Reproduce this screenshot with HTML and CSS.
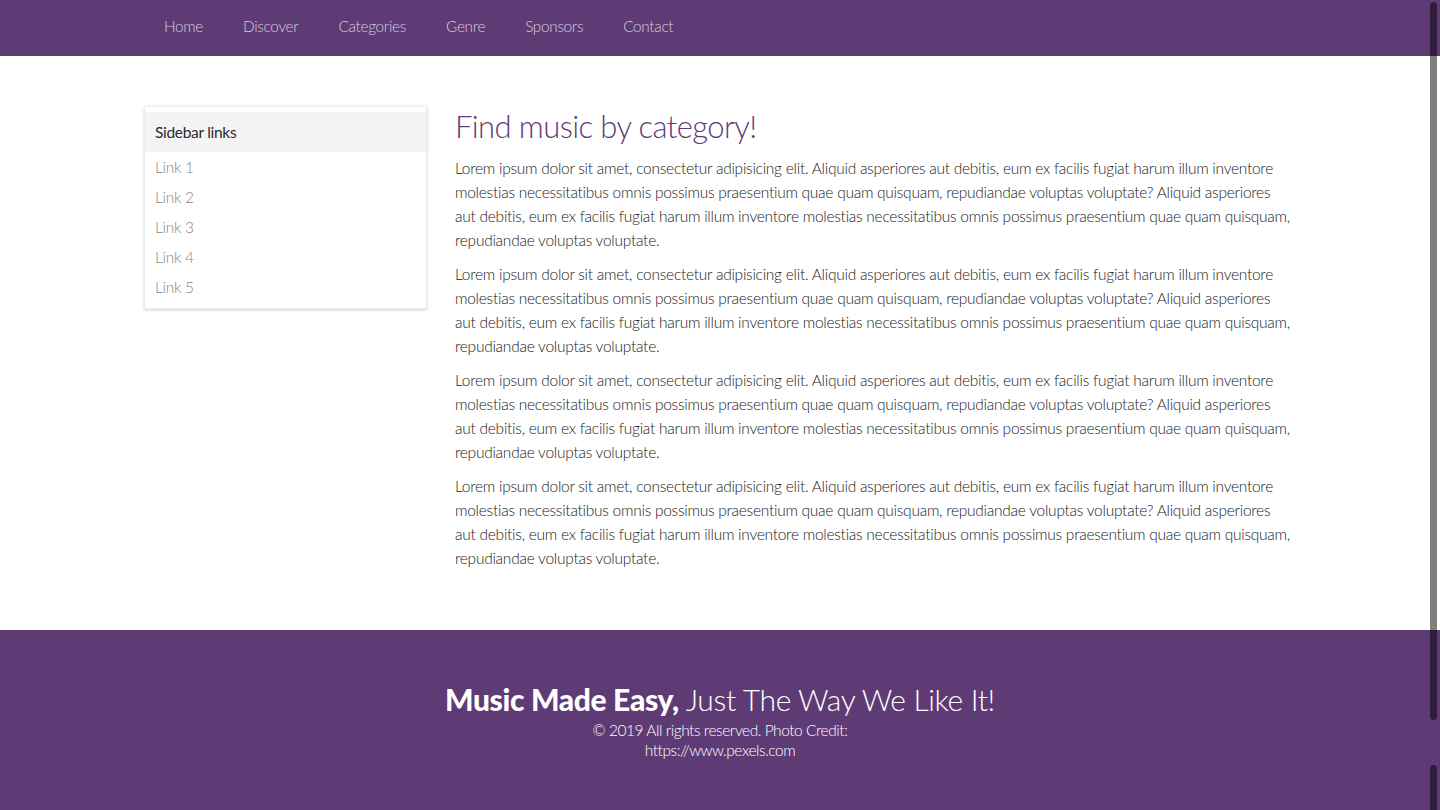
FILE: index.html
```html
<!DOCTYPE html>
<html lang="en">
<head>
<meta charset="utf-8">
<title>Find music by category</title>
<link rel="stylesheet" href="styles.css">
</head>
<body>
<nav class="topnav">
  <div class="container nav-inner">
    <a class="nav-link" href="#">Home</a>
    <a class="nav-link" href="#">Discover</a>
    <a class="nav-link" href="#">Categories</a>
    <a class="nav-link" href="#">Genre</a>
    <a class="nav-link" href="#">Sponsors</a>
    <a class="nav-link" href="#">Contact</a>
  </div>
</nav>

<section class="page">
  <div class="container page-inner">
    <aside class="sidebar">
      <div class="sidebar-head">Sidebar links</div>
      <ul class="sidebar-list">
        <li><a href="#">Link 1</a></li>
        <li><a href="#">Link 2</a></li>
        <li><a href="#">Link 3</a></li>
        <li><a href="#">Link 4</a></li>
        <li><a href="#">Link 5</a></li>
      </ul>
    </aside>
    <main class="content">
      <h1 class="title">Find music by category!</h1>
      <p>Lorem ipsum dolor sit amet, consectetur adipisicing elit. Aliquid asperiores aut debitis, eum ex facilis fugiat harum illum inventore molestias necessitatibus omnis possimus praesentium quae quam quisquam, repudiandae voluptas voluptate? Aliquid asperiores aut debitis, eum ex facilis fugiat harum illum inventore molestias necessitatibus omnis possimus praesentium quae quam quisquam, repudiandae voluptas voluptate.</p>
      <p>Lorem ipsum dolor sit amet, consectetur adipisicing elit. Aliquid asperiores aut debitis, eum ex facilis fugiat harum illum inventore molestias necessitatibus omnis possimus praesentium quae quam quisquam, repudiandae voluptas voluptate? Aliquid asperiores aut debitis, eum ex facilis fugiat harum illum inventore molestias necessitatibus omnis possimus praesentium quae quam quisquam, repudiandae voluptas voluptate.</p>
      <p>Lorem ipsum dolor sit amet, consectetur adipisicing elit. Aliquid asperiores aut debitis, eum ex facilis fugiat harum illum inventore molestias necessitatibus omnis possimus praesentium quae quam quisquam, repudiandae voluptas voluptate? Aliquid asperiores aut debitis, eum ex facilis fugiat harum illum inventore molestias necessitatibus omnis possimus praesentium quae quam quisquam, repudiandae voluptas voluptate.</p>
      <p>Lorem ipsum dolor sit amet, consectetur adipisicing elit. Aliquid asperiores aut debitis, eum ex facilis fugiat harum illum inventore molestias necessitatibus omnis possimus praesentium quae quam quisquam, repudiandae voluptas voluptate? Aliquid asperiores aut debitis, eum ex facilis fugiat harum illum inventore molestias necessitatibus omnis possimus praesentium quae quam quisquam, repudiandae voluptas voluptate.</p>
    </main>
  </div>
</section>

<footer class="footer">
  <h2 class="footer-title"><strong>Music Made Easy,</strong> Just The Way We Like It!</h2>
  <p class="footer-copy">© 2019 All rights reserved. Photo Credit: https://www.pexels.com</p>
</footer>

<div class="scroll-thumb"></div>
<div class="scroll-thumb-2"></div>
</body>
</html>
```
FILE: styles.css
```css
* { box-sizing: border-box; }

html, body {
  margin: 0;
  padding: 0;
  background: #ffffff;
  font-family: "Lato", "Open Sans", sans-serif;
  font-weight: 300;
  color: #333333;
  overflow: hidden;
}

a { text-decoration: none; }

.container {
  width: 1152px;
  margin: 0 auto;
}

/* Top navigation */
.topnav {
  background: #5f3b76;
  height: 56px;
}
.nav-inner {
  display: flex;
  align-items: flex-start;
  height: 56px;
}
.nav-link {
  padding: 0 20px;
  color: #d6cbdf;
  font-size: 15.3px;
  letter-spacing: -0.28px;
  line-height: 52px;
}

/* Page body */
.page {
  padding: 50px 0 50px;
}
.page-inner {
  display: flex;
  align-items: flex-start;
  gap: 28px;
}

.sidebar {
  width: 283px;
  flex: none;
  border: 1px solid #ececec;
  box-shadow: 0 1px 3px rgba(0,0,0,0.18);
  background: #fff;
  padding-top: 5px;
}
.sidebar-head {
  background: #f4f4f4;
  height: 40px;
  line-height: 40px;
  padding: 0 10px;
  color: #2a2a2a;
  font-weight: 400;
  font-size: 15.5px;
  letter-spacing: -0.3px;
}
.sidebar-list {
  list-style: none;
  margin: 0;
  padding: 0 0 6px;
}
.sidebar-list li {
  height: 30px;
  line-height: 30px;
  padding: 0 10px;
}
.sidebar-list a {
  color: #858585;
  font-size: 15.5px;
  letter-spacing: -0.3px;
}

.content {
  flex: 1;
  min-width: 0;
  padding-right: 3px;
}
.title {
  margin: 0 0 10px;
  font-size: 31px;
  font-weight: 300;
  color: #5f3b76;
  line-height: 40px;
  letter-spacing: -0.6px;
}
.content p {
  margin: 0 0 10px;
  font-size: 15.5px;
  line-height: 24px;
  letter-spacing: -0.26px;
  color: #222;
}

/* Footer */
.footer {
  background: #5f3b76;
  color: #ffffff;
  text-align: center;
  padding: 49px 0 52px;
}
.footer-title {
  margin: 0 0 1px;
  font-size: 30px;
  font-weight: 300;
  line-height: 40px;
  letter-spacing: -0.35px;
}
.footer-title strong {
  font-weight: 900;
}
.footer-copy {
  margin: 0 auto;
  width: 262px;
  font-size: 15.5px;
  line-height: 20px;
  letter-spacing: -0.45px;
}

/* overlay scrollbar artifacts */
.scroll-thumb {
  position: fixed;
  right: 3px;
  top: 2px;
  width: 7px;
  height: 718px;
  border-radius: 4px;
  background: rgba(0,0,0,0.5);
}
.scroll-thumb-2 {
  position: fixed;
  right: 3px;
  top: 765px;
  width: 7px;
  height: 60px;
  border-radius: 4px;
  background: rgba(0,0,0,0.5);
}
```
